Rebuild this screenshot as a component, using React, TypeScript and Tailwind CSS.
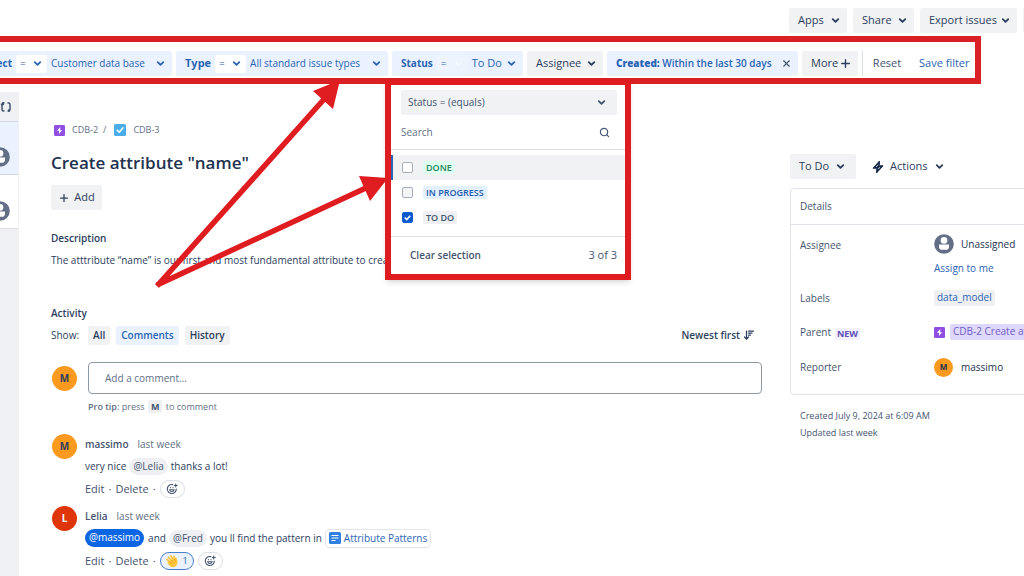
import React from 'react';
import { ArrowDownWideNarrow, ChevronDown, MoreHorizontal, Plus, Search, X } from 'lucide-react';

const STATUSES = [
  { id: 'done', label: 'DONE', color: 'bg-[#dffcf0] text-[#2a8560]', box: 'bg-white', active: true, checked: false },
  { id: 'progress', label: 'IN PROGRESS', color: 'bg-[#e2f0ff] text-[#1f5aad]', box: 'bg-[#f4f5f7]', active: false, checked: false },
  { id: 'todo', label: 'TO DO', color: 'bg-[#eef0f4] text-[#44546f]', box: 'bg-white', active: false, checked: true },
];

const Chevron = () => <ChevronDown size={11} strokeWidth={4} className="shrink-0" />;

const Smile = () => (
  <svg viewBox="0 0 24 24" className="w-[12px] h-[12px]" fill="none" stroke="currentColor" strokeWidth="2.2" strokeLinecap="round">
    <path d="M13.500 3.200A9 9 0 1 0 20.600 12M7.300 13.500a4.600 4.600 0 0 0 9 0zM9 9v.6M14 9v.6M19.500 2v6M16.500 5h6" />
  </svg>
);

const Sync = () => (
  <svg viewBox="0 0 12 12" className="w-[12px] h-[12px] shrink-0" fill="none" stroke="#44546f" strokeWidth="1.5">
    <path d="M4.500 2H3.200Q2 2 2 3.400V8.500Q2 10 3.600 10H4.500M.8 3.500h3M7.500 2h1Q10 2 10 3.500V8.600Q10 10 8.800 10H7.500" />
    <path d="M3 1v3M9 8v3" />
  </svg>
);

const EpicIcon = () => (
  <svg viewBox="0 0 12 12" className="w-[11px] h-[11px] shrink-0">
    <rect width="12" height="12" rx="1.5" fill="#904ee2" />
    <path d="M6.8 2.2 3.2 6.4h2.2v3.4l3.5-4.2H6.8z" fill="#fff" />
  </svg>
);

const TaskIcon = () => (
  <svg viewBox="0 0 12 12" className="w-[12px] h-[12px] shrink-0">
    <rect width="12" height="12" rx="1.5" fill="#4bade8" />
    <path d="m3.2 6.2 2 2 3.7-4.3" fill="none" stroke="#fff" strokeWidth="1.6" strokeLinecap="round" strokeLinejoin="round" />
  </svg>
);

const Person = () => (
  <svg viewBox="0 0 20 20" className="w-[20px] h-[20px] shrink-0">
    <circle cx="10" cy="10" r="9.8" fill="#626f86" />
    <circle cx="10" cy="6.4" r="3.3" fill="#fff" />
    <path d="M5 10.600h10v1.800a3.400 3.400 0 0 1-3.400 3.400H8.400A3.400 3.400 0 0 1 5 12.400z" fill="#fff" />
  </svg>
);

const Operator = () => (
  <span className="flex items-center justify-between h-[18px] w-[31px] px-1 bg-white rounded-xs font-normal shrink-0">
    = <Chevron />
  </span>
);

const FilterBar = () => (
  <div className="flex items-center gap-1 h-[48px] mr-[43px] pt-[7px] border-[6px] border-l-0 border-[#d92025] text-[10px] text-[#2c64b3] overflow-hidden">
    <button className="flex items-center justify-end h-[25px] w-[172px] pr-[6px] bg-[#e9f2fe] rounded-r-xs overflow-hidden shrink-0">
      <span className="font-bold mr-1 shrink-0">Project</span>
      <Operator />
      <span className="w-[98px] ml-1 mr-[6px] text-left font-medium whitespace-nowrap shrink-0">Customer data base</span>
      <Chevron />
    </button>
    <button className="flex items-center h-[25px] w-[212px] pl-[9px] pr-[6px] bg-[#e9f2fe] rounded-xs shrink-0">
      <span className="text-[11px] font-bold mr-1">Type</span>
      <Operator />
      <span className="flex-1 ml-1 text-left font-medium whitespace-nowrap">All standard issue types</span>
      <Chevron />
    </button>
    <button className="flex items-center h-[25px] w-[131px] pl-[9px] pr-[6px] bg-[#e9f2fe] rounded-xs shrink-0">
      <span className="font-bold mr-1">Status</span>
      <span className="flex items-center justify-between h-[18px] w-[31px] px-1 bg-[#edf4fe] rounded-xs shrink-0">
        = <ChevronDown size={11} className="text-white" />
      </span>
      <span className="flex-1 ml-1 text-left text-[11px] font-medium whitespace-nowrap">To Do</span>
      <Chevron />
    </button>
    <button className="flex items-center justify-between h-[25px] w-[76px] pl-[9px] pr-[6px] bg-[#f1f2f4] rounded-xs text-[11px] text-[#2c3e5d] font-medium shrink-0">
      Assignee <Chevron />
    </button>
    <button className="flex items-center justify-between h-[25px] w-[191px] pl-[9px] pr-[6px] bg-[#e9f2fe] rounded-xs font-semibold whitespace-nowrap shrink-0">
      <span><b>Created:</b> Within the last 30 days</span>
      <X size={11} strokeWidth={2.5} className="text-[#44546f] shrink-0" />
    </button>
    <button className="flex items-center justify-between h-[25px] w-[56px] pl-[9px] pr-[6px] bg-[#f1f2f4] rounded-xs text-[11px] text-[#2c3e5d] font-medium shrink-0">
      More <Plus size={13} strokeWidth={2.5} />
    </button>
    <div className="w-px h-[25px] bg-[#dcdfe4] shrink-0" />
    <button className="w-[40px] text-[11px] text-[#44546f] shrink-0">Reset</button>
    <a href="#save" className="ml-2 text-[11px] whitespace-nowrap">Save filter</a>
  </div>
);

const StatusMenu = () => (
  <div className="absolute left-[385px] top-[79px] w-[246px] bg-white border-[6px] border-[#df1c20] shadow-md text-[#44546f]">
    <div className="pl-[10px] pr-2 pt-[5px]">
      <button className="flex items-center justify-between w-full h-[25px] px-[7px] bg-[#f1f2f4] rounded-xs">
        Status = (equals)
        <span className="mr-[3px]"><Chevron /></span>
      </button>
      <label className="flex items-center h-[34px] pr-[7px]">
        <input type="text" placeholder="Search" aria-label="Search statuses" className="flex-1 min-w-0 outline-none placeholder:text-[#626f86]" />
        <Search size={11} strokeWidth={2.5} />
      </label>
    </div>
    <div className="pt-[5px] pb-[6px] border-y border-[#dcdfe4]">
      {STATUSES.map((status) => (
        <label
          key={status.id}
          className={`flex items-center h-[25px] pl-[9px] border-l-2 ${status.active ? 'bg-[#f1f2f4] border-[#2c64b3]' : 'border-transparent'}`}
        >
          <input type="checkbox" defaultChecked={status.checked} className="peer sr-only" />
          <span className={`flex items-center justify-center w-[11px] h-[11px] border border-[#a5adba] rounded-xs peer-checked:bg-[#0c5bce] peer-checked:border-[#0c5bce] ${status.box}`}>
            {status.checked && (
              <svg viewBox="0 0 10 10" className="w-[9px] h-[9px]" fill="none" stroke="#fff" strokeWidth="1.8"><path d="m2 5 2.200 2.200L8 3" /></svg>
            )}
          </span>
          <span className={`ml-[10px] px-[3px] h-[13px] leading-[13px] text-[9px] font-semibold rounded-xs ${status.color}`}>{status.label}</span>
        </label>
      ))}
    </div>
    <div className="flex items-center justify-between h-[37px] pl-[19px] pr-2">
      <button className="font-semibold">Clear selection</button>
      <span className="text-[11px]">3 of 3</span>
    </div>
  </div>
);

const Sidebar = () => (
  <aside className="w-[19px] shrink-0 bg-[#eef0f4] overflow-hidden">
    <div className="flex items-center h-[29px]">
      <Sync />
    </div>
    <div className="flex items-center justify-end h-[54px] mr-px pt-[18px] pr-2 bg-[#e9f2fe] border-y border-[#cfd9e8]"><Person /></div>
    <div className="flex items-center justify-end h-[54px] mr-px pt-[18px] pr-2 bg-white border-b border-[#dcdfe4]"><Person /></div>
  </aside>
);

const Avatar = ({ letter, color }: { letter: string; color: string }) => (
  <span className={`flex items-center justify-center w-[25px] h-[25px] rounded-full text-[10px] font-bold shrink-0 ${color}`}>{letter}</span>
);

const Mention = ({ name }: { name: string }) => (
  <span className="px-1 mx-[3px] h-[17px] leading-4 rounded-full bg-[#eef0f4] text-[#44546f]">@{name}</span>
);

const CommentActions = ({ claps }: { claps?: number }) => (
  <div className="flex items-center gap-1 h-[24px] text-[11px] text-[#44546f]">
    <button className="font-medium">Edit</button>
    <span>·</span>
    <button className="font-medium">Delete</button>
    <span>·</span>
    {claps && (
      <button className="flex items-center justify-center gap-[3px] w-[34px] h-[18px] rounded-full border border-[#4a7fc9] bg-[#e9f2fe] text-[9px] text-[#2c64b3]">
        <svg viewBox="0 0 14 14" className="w-[14px] h-[14px]" strokeLinecap="round" fill="none">
          <path d="m6 8.500-4.200-3M6.500 7 3.500 3.200M8 6 6 2M9.500 5.500 9 2.500" stroke="#f9c846" strokeWidth="1.8" />
          <path d="M4 7.500 9 4.500l2-1.500 1.500 4c.5 3-1 5.500-3.500 6s-4-.5-5.500-2.500L2 8.500z" fill="#fcc73c" />
          <path d="m4.500 8 2.500 2M6.500 6.500 9 8.500M9 5l1.500 2" stroke="#e79a1f" strokeWidth=".8" />
        </svg>
        {claps}
      </button>
    )}
    <button aria-label="Add reaction" className="flex items-center justify-center w-[25px] h-[18px] rounded-full border border-[#dcdfe4]"><Smile /></button>
  </div>
);

const Issue = () => (
  <main className="flex-1 min-w-0 pl-8 pt-[29px]">
    <nav className="flex items-center h-[18px] pl-[3px] text-[9px] text-[#626f86]">
      <EpicIcon />
      <a href="#cdb-2" className="ml-[7px]">CDB-2</a>
      <span className="mx-[5px]">/</span>
      <span className="ml-[3px] flex"><TaskIcon /></span>
      <a href="#cdb-3" className="ml-[7px]">CDB-3</a>
    </nav>
    <h1 className="mt-[11px] h-[26px] leading-[26px] text-[17px] font-semibold text-[#22324e]">Create attribute "name"</h1>
    <button className="flex items-center justify-center gap-1 mt-[9px] w-[51px] h-[25px] bg-[#f1f2f4] rounded-xs text-[11px] font-medium">
      <Plus size={12} strokeWidth={2.5} /> Add
    </button>
    <h2 className="mt-5 h-4 leading-4 font-semibold">Description</h2>
    <p className="mt-[6px] h-4 leading-4 whitespace-nowrap">The atttribute “name” is our first and most fundamental attribute to create</p>
    <h2 className="mt-[37px] h-4 leading-4 font-semibold">Activity</h2>
    <div className="flex items-center mt-1 h-[20px]">
      <span className="mr-[9px]">Show:</span>
      <div className="flex gap-[6px] font-semibold">
        <button className="px-[5px] h-[19px] bg-[#f1f2f4] rounded-xs">All</button>
        <button className="px-[5px] h-[19px] bg-[#e9f2fe] rounded-xs text-[#2c64b3]">Comments</button>
        <button className="px-[5px] h-[19px] bg-[#f1f2f4] rounded-xs">History</button>
      </div>
      <button className="flex items-center gap-[3px] ml-auto mr-[7px] font-semibold">
        Newest first <ArrowDownWideNarrow size={12} strokeWidth={2.5} />
      </button>
    </div>

    <div className="flex items-center gap-[11px] mt-[17px] pl-px">
      <Avatar letter="M" color="bg-[#fb9a1f]" />
      <input type="text" placeholder="Add a comment…" aria-label="Add a comment" className="flex-1 h-[32px] px-4 border border-[#8f98a6] rounded-sm outline-none placeholder:text-[#626f86]" />
    </div>
    <p className="mt-[5px] ml-[37px] h-4 leading-4 text-[9px] text-[#626f86]">
      <span className="font-semibold">Pro tip:</span> press <kbd className="mx-px px-[3px] bg-[#eef0f4] rounded-xs font-sans font-bold text-[#44546f]">M</kbd> to comment
    </p>

    <article className="flex gap-2 mt-[18px] pl-px">
      <div className="mt-px"><Avatar letter="M" color="bg-[#fb9a1f]" /></div>
      <div>
        <div className="flex items-center h-[22px] gap-[9px] text-[#626f86]"><b className="font-semibold text-[#44546f]">massimo</b> last week</div>
        <div className="flex items-center h-[22px]">very nice <Mention name="Lelia" /> thanks a lot!</div>
        <CommentActions />
      </div>
    </article>
    <article className="flex gap-2 mt-1 pl-px">
      <div className="mt-px"><Avatar letter="L" color="bg-[#de350b] text-white" /></div>
      <div>
        <div className="flex items-center h-[22px] gap-[9px] text-[#626f86]"><b className="font-semibold text-[#44546f]">Lelia</b> last week</div>
        <div className="flex items-center h-[22px]">
          <span className="px-1 mr-1 h-[18px] leading-4 rounded-full bg-[#0c66e4] text-white">@massimo</span>
          and <Mention name="Fred" /> you ll find the pattern in
          <a href="#patterns" className="flex items-center gap-[3px] ml-[3px] px-[3px] h-[19px] border border-[#e3e5ea] rounded-sm text-[#2c64b3]">
            <svg viewBox="0 0 12 12" className="w-[12px] h-[12px]">
              <rect width="12" height="12" rx="1.500" fill="#2f80e0" />
              <path d="M2.500 3.500h7M2.500 6h7M2.500 8.500h4" stroke="#fff" strokeWidth="1.100" />
            </svg>
            Attribute Patterns
          </a>
        </div>
        <CommentActions claps={1} />
      </div>
    </article>
  </main>
);

const Details = () => (
  <aside className="w-[234px] ml-[28px] pt-[62px] shrink-0 overflow-hidden">
    <div className="flex items-center text-[11px] font-medium">
      <button className="flex items-center justify-between w-[66px] h-[25px] pl-[9px] pr-[10px] bg-[#f1f2f4] rounded-xs">To Do <Chevron /></button>
      <button className="flex items-center ml-4 h-[25px]">
        <svg viewBox="0 0 12 14" className="w-[12px] h-[14px] mr-[6px]"><path d="M7.500 1 1 8.200h3.800L4.500 13 11 5.800H7.200z" fill="#172b4d" stroke="#172b4d" strokeLinejoin="round" /><path d="M6 4.800 4.200 6.900M7.800 7.200 6.300 9" stroke="#fff" strokeWidth=".8" /></svg>
        Actions <span className="ml-[6px]"><Chevron /></span>
      </button>
    </div>
    <section className="mt-[9px] h-[207px] w-[260px] border border-[#e1e3e8] rounded-sm text-[#44546f]">
      <h2 className="flex items-center h-[36px] pl-[9px] border-b border-[#e1e3e8]">Details</h2>
      <dl className="grid grid-cols-[134px_1fr] pl-[9px] whitespace-nowrap">
        <dt className="h-[57px] pt-[12px] leading-4">Assignee</dt>
        <dd className="pt-[9px]">
          <span className="flex items-center gap-[7px] h-[20px] text-[#22324e]"><Person /> Unassigned</span>
          <a href="#assign" className="block mt-[6px] leading-4 text-[#2c64b3]">Assign to me</a>
        </dd>
        <dt className="flex items-center h-[32px]">Labels</dt>
        <dd className="flex items-center"><a href="#data_model" className="px-[3px] h-[16px] leading-[15px] bg-[#eef0f4] rounded-xs text-[#2c64b3]">data_model</a></dd>
        <dt className="flex items-center h-[36px]">Parent <b className="ml-1 mt-1 px-[2px] leading-3 text-[9px] bg-[#f3f0ff] text-[#5e4db2] rounded-xs">NEW</b></dt>
        <dd className="flex items-center gap-[5px]">
          <EpicIcon />
          <a href="#cdb-2" className="px-[3px] h-[16px] leading-[15px] bg-[#dfd8fd] text-[#6e5dc6] rounded-xs">CDB-2 Create attribute</a>
        </dd>
        <dt className="flex items-center h-[34px]">Reporter</dt>
        <dd className="flex items-center gap-2 text-[#22324e]">
          <span className="flex items-center justify-center w-[19px] h-[19px] rounded-full bg-[#fb9a1f] text-[8px] font-bold">M</span>
          massimo
        </dd>
      </dl>
    </section>
    <p className="mt-[12px] pl-[10px] text-[9px] leading-[17px] text-[#44546f]">Created July 9, 2024 at 6:09 AM<br />Updated last week</p>
  </aside>
);

// Red callout arrows drawn over the page
const Arrows = () => (
  <svg className="absolute left-0 top-0 pointer-events-none" width="400" height="300" viewBox="0 0 400 300">
    <path d="M157 286 326 97M157 285 368 187" stroke="#df1c20" strokeWidth="5.5" />
    <path d="M340 80 313 91 333 109zM388 178 359 176 370 201z" fill="#df1c20" />
  </svg>
);

const App: React.FC = () => {
  return (
    <div className="relative flex flex-col h-screen overflow-hidden bg-white font-['Open_Sans','Noto_Sans',sans-serif] text-[10px] text-[#2c3e5d]">
      <header className="flex justify-end gap-[6px] pt-2 h-[36px] shrink-0 text-[11px] font-medium whitespace-nowrap">
        <button className="flex items-center justify-between w-[58px] h-[25px] pl-[9px] pr-[6px] bg-[#f1f2f4] rounded-xs">Apps <Chevron /></button>
        <button className="flex items-center justify-between w-[61px] h-[25px] pl-[9px] pr-[6px] bg-[#f1f2f4] rounded-xs">Share <Chevron /></button>
        <button className="flex items-center justify-between w-[97px] h-[25px] pl-[9px] pr-[6px] bg-[#f1f2f4] rounded-xs">Export issues <Chevron /></button>
        <button aria-label="More actions" className="flex items-center justify-center w-[26px] h-[25px] -mr-[25px] bg-[#f1f2f4] rounded-xs"><MoreHorizontal size={12} /></button>
      </header>
      <FilterBar />
      <div className="flex flex-1 mt-2">
        <Sidebar />
        <Issue />
        <Details />
      </div>
      <Arrows />
      <StatusMenu />
    </div>
  );
};

export default App;
